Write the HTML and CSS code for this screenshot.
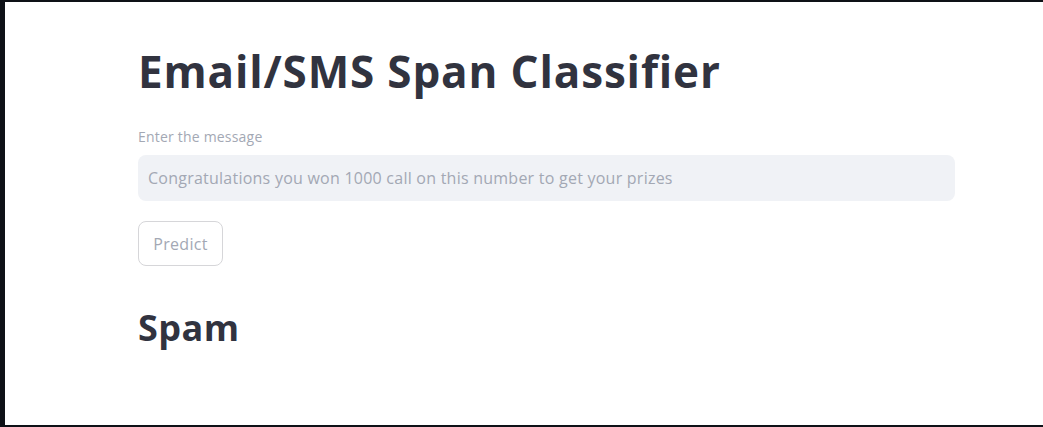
FILE: index.html
```html
<!DOCTYPE html>
<html>
<head>
<meta charset="utf-8">
<link rel="stylesheet" href="styles.css">
</head>
<body>
<div class="frame">
  <main class="main">
    <h1 class="title">Email/SMS Span Classifier</h1>
    <div class="field">
      <label class="label">Enter the message</label>
      <div class="input">Congratulations you won 1000 call on this number to get your prizes</div>
    </div>
    <button class="btn">Predict</button>
    <h2 class="result">Spam</h2>
  </main>
</div>
</body>
</html>
```
FILE: styles.css
```css
html, body {
  margin: 0;
  padding: 0;
  background: #0e1117;
}
.frame {
  box-sizing: border-box;
  width: 1043px;
  height: 427px;
  border-top: 2px solid #0e1117;
  border-left: 5px solid #0e1117;
  border-bottom: 2px solid #0e1117;
  background: #ffffff;
  overflow: hidden;
}
.main {
  display: flex;
  flex-direction: column;
  align-items: flex-start;
  padding: 0 88px 0 133px;
  font-family: "Open Sans", "Noto Sans", sans-serif;
  color: #31333f;
}
.title {
  margin: 39px 0 0 0;
  font-size: 44px;
  line-height: 60px;
  font-weight: 700;
  letter-spacing: 0.85px;
}
.field {
  display: flex;
  flex-direction: column;
  width: 100%;
  margin-top: 27px;
}
.label {
  font-size: 14px;
  line-height: 18px;
  color: #a3a8b4;
  letter-spacing: 0.2px;
  margin-bottom: 9px;
}
.input {
  box-sizing: border-box;
  width: 100%;
  height: 46px;
  padding: 0 10px;
  display: flex;
  align-items: center;
  background: #f0f2f6;
  border-radius: 8px;
  font-size: 16px;
  letter-spacing: 0.24px;
  color: #a3a8b4;
}
.btn {
  margin-top: 20px;
  box-sizing: border-box;
  height: 45px;
  width: 85px;
  background: #ffffff;
  border: 1px solid #d6d6d9;
  border-radius: 8px;
  font-family: inherit;
  font-size: 16px;
  letter-spacing: 0.3px;
  color: #a3a8b4;
  padding: 0;
}
.result {
  margin: 38px 0 0 0;
  font-size: 36px;
  line-height: 48px;
  font-weight: 700;
  letter-spacing: 0.5px;
}
```
